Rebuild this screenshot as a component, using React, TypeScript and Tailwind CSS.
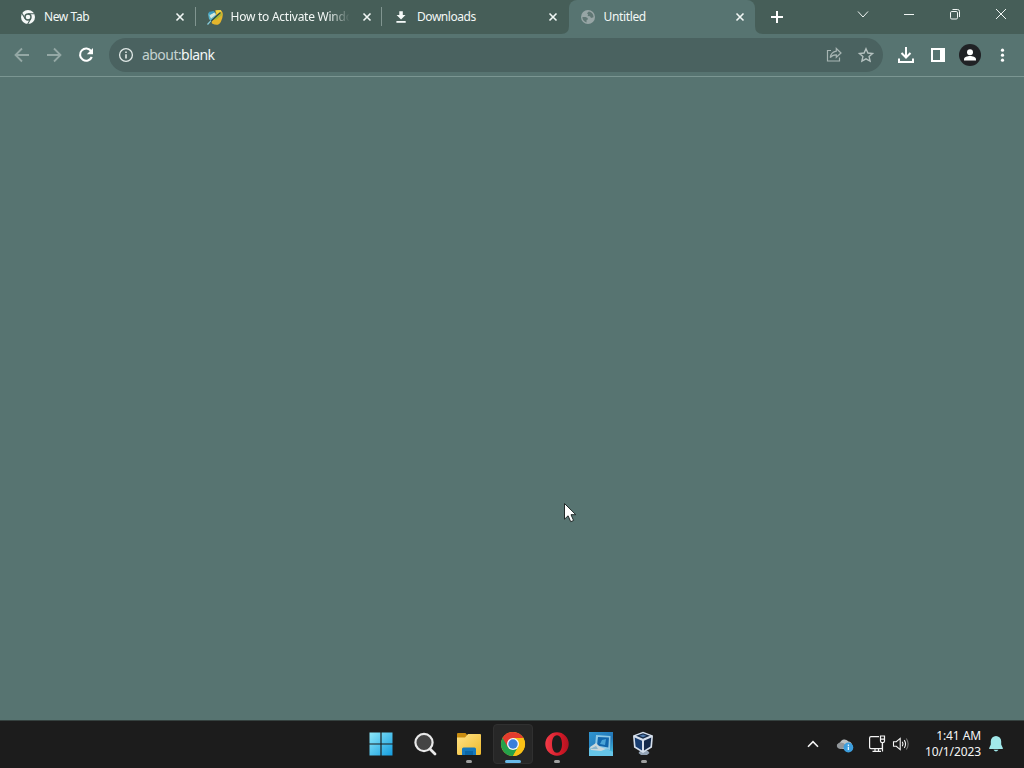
import type { ReactNode } from "react"

function CloseIcon() {
  return (
    <svg width="10" height="10" viewBox="0 0 10 10" fill="none" stroke="#f1f6f4" strokeWidth="1.6">
      <path d="M1.5 1.5 8.5 8.5M8.5 1.5 1.5 8.5" />
    </svg>
  )
}

function ChromeMono() {
  return (
    <svg width="16" height="16" viewBox="0 0 16 16">
      <circle cx="8" cy="8" r="7" fill="#f4f8f7" />
      <circle cx="8" cy="8" r="3.7" fill="#465e58" />
      <circle cx="8" cy="8" r="2.3" fill="#f4f8f7" />
      <path d="M8 4.8H14.5M5.2 9.6 1.9 4.2M10.8 9.6 7.6 15.2" stroke="#465e58" strokeWidth="1.1" />
    </svg>
  )
}

// Split blue / yellow leaf with a dark stem
function LeafIcon() {
  return (
    <svg width="18" height="18" viewBox="0 0 18 18">
      <path d="M2 5.5 8 3.5 11.5 7 5 13 3 11Z" fill="#59b5cc" />
      <path d="M3.5 7.5 8 4.5 10 6.5 5 10.5Z" fill="#d9e7d8" />
      <path d="M2.5 4 7.5 3 8.5 4.5 4 6.5Z" fill="#3a9cc1" />
      <path d="M9.5 2.5Q15.5 1 16.5 4.5T15 13.5 6 15.5Q4.5 11 10 8.5Z" fill="#e3b52c" />
      <path d="M6.5 12C9 8 12.5 7.5 15 4.5L16 7 10.5 11.5Z" fill="#a8b936" />
      <path d="M9.3 2.6 14.8 2 15.4 3.8 11.5 6.2Z" fill="#f0d547" />
      <path d="M3.5 14.5C7 11.5 11 7.5 14.5 4.5" fill="none" stroke="#26464a" strokeWidth="1.2" />
      <path d="M1.5 16.5 5 12.7" stroke="#8ad1e0" strokeWidth="1.2" />
    </svg>
  )
}

function DownloadGlyph() {
  return (
    <svg width="16" height="16" viewBox="0 0 16 16" fill="#f5f9f8">
      <path d="M6.3 2.2H9.8V6.1H12.5L8.05 10.6 3.6 6.1H6.3Z" />
      <path d="M3.4 12H12.7V13.8H3.4Z" />
    </svg>
  )
}

function GlobeGlyph() {
  return (
    <svg width="16" height="16" viewBox="0 0 16 16">
      <circle cx="8" cy="8" r="7" fill="#97a5a5" />
      <path d="M2.4 8.1C5 7.9 7.8 8 8 10.2L6.6 11 6.5 13.5C3.8 12.7 2.3 10.5 2.4 8.1ZM8.8 2.4 7 4.3 8.2 5.6 7.6 7.1 10 7.3 11 9 13.5 8.3C13.7 5.2 11.7 2.8 8.8 2.4Z" fill="#607774" />
    </svg>
  )
}

type TabProps = { icon: ReactNode; title: string; active?: boolean; separator?: boolean; fade?: boolean; track?: string }

function Tab({ icon, title, active, separator, fade, track = "" }: TabProps) {
  return (
    <div className={`relative flex h-[34px] w-[186.5px] shrink-0 items-center ${active ? "rounded-t-lg bg-[#577471]" : ""}`}>
      {active && (
        <>
          <svg className="absolute bottom-0 -left-2" width="8" height="8" viewBox="0 0 8 8"><path d="M8 0Q8 8 0 8H8Z" fill="#577471" /></svg>
          <svg className="absolute -right-2 bottom-0" width="8" height="8" viewBox="0 0 8 8"><path d="M0 0Q0 8 8 8H0Z" fill="#577471" /></svg>
        </>
      )}
      <span className="ml-[10px] flex w-[18px] shrink-0 justify-center">{icon}</span>
      <span className={`ml-[7px] w-[118px] shrink-0 overflow-hidden text-[12px] leading-[18px] font-[450] whitespace-nowrap text-[#f3f8f6] ${track} ${fade ? "[mask-image:linear-gradient(90deg,#000_98px,transparent_119px)]" : ""}`}>
        {title}
      </span>
      <span className="ml-[13px] shrink-0"><CloseIcon /></span>
      {separator && <span className="absolute top-[7px] right-0 h-[19px] w-px bg-[#819590]" />}
    </div>
  )
}

function WindowButton({ children }: { children: ReactNode }) {
  return (
    <button className="flex h-[28px] w-[46px] items-center justify-center">
      <svg width="14" height="14" viewBox="0 0 14 14" fill="none" stroke="#f1f6f4" strokeWidth="1">{children}</svg>
    </button>
  )
}

function TabStrip() {
  return (
    <div className="flex h-[34px] bg-[#465e58] pl-[9px]">
      <Tab icon={<ChromeMono />} title="New Tab" separator track="tracking-[-0.4px]" />
      <Tab icon={<LeafIcon />} title="How to Activate Windo" separator fade track="tracking-[-0.25px]" />
      <Tab icon={<DownloadGlyph />} title="Downloads" track="tracking-[-0.45px]" />
      <Tab icon={<GlobeGlyph />} title="Untitled" active track="tracking-[-0.35px]" />
      <button className="ml-[15px] flex w-[14px] items-center justify-center">
        <svg width="14" height="14" viewBox="0 0 14 14" stroke="#fff" strokeWidth="2"><path d="M7 1V13M1 7H13" /></svg>
      </button>
      <div className="ml-auto flex">
        <WindowButton><path d="M2 4.5 7 10 12 4.5" /></WindowButton>
        <WindowButton><path d="M2 7.5H12" /></WindowButton>
        <WindowButton>
          <rect x="2.5" y="4.5" width="7" height="7.5" rx="1.3" />
          <path d="M4.5 2.5H9.5Q11.5 2.5 11.5 4.5V10" />
        </WindowButton>
        <WindowButton><path d="M2 2 12 12M12 2 2 12" /></WindowButton>
      </div>
    </div>
  )
}

function ToolButton({ children }: { children: ReactNode }) {
  return (
    <button className="flex h-8 w-8 shrink-0 items-center justify-center">
      <svg width="24" height="24" viewBox="0 0 24 24" fill="none">{children}</svg>
    </button>
  )
}

function Toolbar() {
  return (
    <div className="flex h-[43px] items-center border-b border-[#7b9692] bg-[#577471] pl-[6px]">
      <ToolButton><path d="M19 12H6M12 5.5 5.5 12 12 18.5" stroke="#94a8a5" strokeWidth="1.8" /></ToolButton>
      <ToolButton><path d="M5 12H18M12 5.5 18.5 12 12 18.5" stroke="#94a8a5" strokeWidth="1.8" /></ToolButton>
      <ToolButton>
        <path d="M17.2 8.2A6.1 6.1 0 1 0 17.8 14" stroke="#fff" strokeWidth="2.1" />
        <path d="M19 5V11.2H12.8Z" fill="#fff" />
      </ToolButton>
      <div className="ml-[7px] flex h-[34px] w-[774px] shrink-0 items-center rounded-full bg-[#4a6260] pl-[9px]">
        <svg width="16" height="16" viewBox="0 0 16 16" fill="none">
          <circle cx="8" cy="8" r="6.4" stroke="#e1e9e7" strokeWidth="1.3" />
          <path d="M8 7.2V11.4M8 4.5V6.1" stroke="#e1e9e7" strokeWidth="1.6" />
        </svg>
        <span className="ml-2 text-[14px] leading-5 tracking-[-0.55px] text-[#f4f8f7]"><span className="text-[#c5d2d0]">about:</span>blank</span>
        <div className="mr-[1px] ml-auto flex">
          <ToolButton>
            <path d="M9 7.5H5.5V18H17.5V14.5" stroke="#a7b5b3" strokeWidth="1.2" />
            <path d="M14.3 5.5 19 10 14.3 14.3V11.8C11.5 11.7 9.6 12.6 8.2 14.6 8.8 11.2 10.5 8.8 14.3 8.2Z" stroke="#a7b5b3" strokeWidth="1.2" />
          </ToolButton>
          <ToolButton><path d="m12 5.7 1.9 4.3 4.7.5-3.5 3.1 1 4.6-4.1-2.4-4.1 2.4 1-4.6-3.5-3.1 4.7-.5Z" stroke="#b4c1bf" strokeWidth="1.4" /></ToolButton>
        </div>
      </div>
      <div className="ml-[7px] flex">
        <ToolButton><path d="M12 4V14M7.5 10 12 14.5 16.5 10M5 15.5V19H19V15.5" stroke="#fff" strokeWidth="2" /></ToolButton>
        <ToolButton>
          <path d="M5 5H19V19H5Z" fill="#fff" />
          <path d="M7 7H14V17H7Z" fill="#577471" />
        </ToolButton>
        <ToolButton>
          <circle cx="12" cy="12" r="11" fill="#202225" />
          <circle cx="12" cy="9.2" r="3" fill="#fff" />
          <path d="M6 17.5V16.3C6 14 9.5 13 12 13S18 14 18 16.3V17.5Z" fill="#fff" />
        </ToolButton>
        <ToolButton>
          <circle cx="12.5" cy="7.2" r="1.6" fill="#fff" />
          <circle cx="12.5" cy="12.2" r="1.6" fill="#fff" />
          <circle cx="12.5" cy="17.2" r="1.6" fill="#fff" />
        </ToolButton>
      </div>
    </div>
  )
}

function TaskItem({ children, state }: { children: ReactNode; state?: "open" | "active" }) {
  return (
    <div className="flex h-[46px] w-11 items-center justify-center">
      <div className={`relative flex h-10 w-10 items-center justify-center rounded ${state === "active" ? "border border-[#303030] bg-[#272727]" : ""}`}>
        <svg width="26" height="26" viewBox="0 0 26 26">{children}</svg>
        {state === "open" && <span className="absolute bottom-px left-[17px] h-[3px] w-[6px] rounded-full bg-[#a0a0a0]" />}
        {state === "active" && <span className="absolute bottom-0 left-[11px] h-[3px] w-4 rounded-full bg-[#69b9e8]" />}
      </div>
    </div>
  )
}

function TaskbarApps() {
  return (
    <div className="flex h-full">
      <TaskItem>
        <defs>
          <linearGradient id="win" x1="0" y1="0" x2="1" y2="1"><stop stopColor="#8ee9fa" /><stop offset="1" stopColor="#139cdf" /></linearGradient>
        </defs>
        <path d="M1.5 1.5H12.4V12.4H1.5ZM13.6 1.5H24.5V12.4H13.6ZM1.5 13.6H12.4V24.5H1.5ZM13.6 13.6H24.5V24.5H13.6Z" fill="url(#win)" />
      </TaskItem>
      <TaskItem>
        <circle cx="12" cy="11.5" r="8.6" fill="#454545" stroke="#e9e9e9" strokeWidth="2.2" />
        <path d="M18 18 23 23" stroke="#e9e9e9" strokeWidth="2.8" strokeLinecap="round" />
      </TaskItem>
      <TaskItem state="open">
        <defs>
          <linearGradient id="folder" x1="0" y1="0" x2="1" y2="1"><stop stopColor="#ffe387" /><stop offset="1" stopColor="#efb92c" /></linearGradient>
        </defs>
        <path d="M1 7V3Q1 2 2 2H9.5L12 5 9 8Z" fill="#c98c10" />
        <path d="M1 6.5H9L12 3H24Q25 3 25 4V22.5Q25 24 23.5 24H2.5Q1 24 1 22.5Z" fill="url(#folder)" />
        <path d="M6 24V18Q6 16.5 7.5 16.5H18.5Q20 16.5 20 18V24Z" fill="#1679bd" />
        <path d="M9 20H17V24H9Z" fill="#0b66a6" />
      </TaskItem>
      <TaskItem state="active">
        <circle cx="13" cy="13" r="12" fill="#fbc116" />
        <path d="M13 13 2.6 7A12 12 0 0 0 13 25L18.2 16Z" fill="#25a14a" />
        <path d="M2.6 7A12 12 0 0 1 23.4 7H13L7.8 16Z" fill="#e33b2e" />
        <path d="M13 7H23.4A12 12 0 0 1 13 25L18.2 16Z" fill="#fbc116" />
        <circle cx="13" cy="13" r="6" fill="#f4f6f9" />
        <circle cx="13" cy="13" r="4.7" fill="#397edb" />
      </TaskItem>
      <TaskItem state="open">
        <defs>
          <linearGradient id="opera"><stop stopColor="#f33b48" /><stop offset=".7" stopColor="#cf1725" /><stop offset="1" stopColor="#b01422" /></linearGradient>
        </defs>
        <path fillRule="evenodd" d="M13 1.3A11.7 11.7 0 1 0 13 24.7 11.7 11.7 0 1 0 13 1.3ZM13 4.2C16.2 4.2 18 8 18 13S16.2 21.8 13 21.8 8 18 8 13 9.8 4.2 13 4.2Z" fill="url(#opera)" />
      </TaskItem>
      <TaskItem>
        <defs>
          <linearGradient id="picture" x1="0" y1="0" x2="1" y2="1"><stop stopColor="#2f95d0" /><stop offset=".6" stopColor="#2277b8" /><stop offset="1" stopColor="#4dd0e9" /></linearGradient>
        </defs>
        <path d="M1 1H25V25H1Z" fill="url(#picture)" />
        <path d="M1 17 9 13 25 21V25H1Z" fill="#66c5e8" />
        <path d="M8 4 22.5 5 22 19 7 16Z" fill="#8cc8e6" />
        <path d="M10 6 21 6.5 20.3 16.5 9 14.5Z" fill="#1266ac" />
        <path d="M14 9 18 8 17 14 12 13Z" fill="#4aa4d7" />
        <path d="M2 16 8 12 12 16 18 18 13 20 3 19Z" fill="#c9d6da" />
        <path d="M2 18 8 15 10 18Z" fill="#88b5cd" />
      </TaskItem>
      <div className="-ml-px">
        <TaskItem state="open">
          <path d="M9 20 17 20 18.5 22 16 24H10L7.5 22Z" fill="#93a3b5" />
          <path d="M12 .8 22 4.5 21 16.5 12 22 3 16.5 2 4.5Z" fill="#d6e0ed" />
          <path d="M5 4.8 12 2.3 19 4.8 12 7.8Z" fill="#172b48" />
          <path d="M3.7 6.5 11 9.8V19.5L4.6 15.4Z" fill="#193d70" />
          <path d="M20.3 6.5 13 9.8V19.5L19.4 15.4Z" fill="#13294b" />
          <path d="M8.5 4.8 12 3.5 15.5 4.8 12 6.2Z" fill="#507caf" />
        </TaskItem>
      </div>
    </div>
  )
}

function Tray() {
  return (
    <div className="mr-5 ml-auto flex h-[46px] items-center">
      <svg className="mr-[17px]" width="12" height="12" viewBox="0 0 12 12" fill="none" stroke="#f4f4f4" strokeWidth="1.6"><path d="M1 8.7 6 3.7 11 8.7" /></svg>
      <svg className="mt-[2px] mr-[14px]" width="18" height="18" viewBox="0 0 18 18">
        <path d="M4.5 13A4 4 0 0 1 4 6.5 5 5 0 0 1 12.5 5.5 4 4 0 0 1 14 13Z" fill="#bcc1c3" />
        <path d="M3 6.8Q7 5.6 10.5 9.5L6 13H4.5Q0 12 1 8.4Z" fill="#92979b" />
        <circle cx="12.4" cy="11.5" r="4.9" fill="#3c9ede" />
        <path d="M12.4 10.8V14M12.4 8.6V10" stroke="#e5f6ff" strokeWidth="1.3" />
      </svg>
      <svg className="mr-[6px]" width="18" height="18" viewBox="0 0 18 18" fill="none" stroke="#f4f4f4" strokeWidth="1.2">
        <path d="M11 1.6H3Q1.6 1.6 1.6 3V12.2Q1.6 13.6 3 13.6H14.4V8M4.5 16.4H13M7 13.6V16.4M10.5 13.6V16.4" />
        <path d="M12.5 1H16.5V6L15.8 7.5H13.2L12.5 6ZM12.5 4.2H16.5M14.5 7.5V16.4" />
      </svg>
      <svg className="mr-[14px]" width="18" height="18" viewBox="0 0 18 18" fill="none" stroke="#f4f4f4" strokeWidth="1.1">
        <path d="M1.5 6.7H4.3L8.2 3.4V14.6L4.3 11.3H1.5ZM10.3 6.8Q11.7 9 10.3 11.2M12.3 5.1Q14.8 9 12.3 12.9" />
        <path d="M14.3 3.5Q18 9 14.3 14.5" stroke="#777" />
      </svg>
      <div className="w-[57px] text-right text-[12px] leading-4 whitespace-nowrap text-[#f5f5f5]">
        <p className="tracking-[-0.1px]">1:41 AM</p>
        <p className="tracking-[-0.1px]">10/1/2023</p>
      </div>
      <svg className="ml-[7px]" width="16" height="18" viewBox="0 0 16 18" fill="#a1e8ea">
        <path d="M8 1A5.2 5.2 0 0 0 2.8 6.2V9.5L1.2 13V14H14.8V13L13.2 9.5V6.2A5.2 5.2 0 0 0 8 1ZM5.5 14.8H10.5Q8 18 5.5 14.8Z" />
      </svg>
    </div>
  )
}

export default function App() {
  return (
    <div className="relative flex h-screen w-screen flex-col overflow-hidden bg-[#577471] font-['Noto_Sans','Open_Sans',sans-serif]">
      <TabStrip />
      <Toolbar />
      <main className="flex-1" />
      <footer className="flex h-12 shrink-0 border-t border-[#35413f] bg-[#1c1c1c] pl-[359px]">
        <TaskbarApps />
        <Tray />
      </footer>
      <svg className="absolute top-[502px] left-[563px]" width="15" height="22" viewBox="0 0 15 22">
        <path d="M1.5 1.5V17.2L5.1 13.8 7.7 19.7 10.6 18.5 8 12.7H12.8Z" fill="#fff" stroke="#222b2a" strokeWidth="1" />
      </svg>
    </div>
  )
}
